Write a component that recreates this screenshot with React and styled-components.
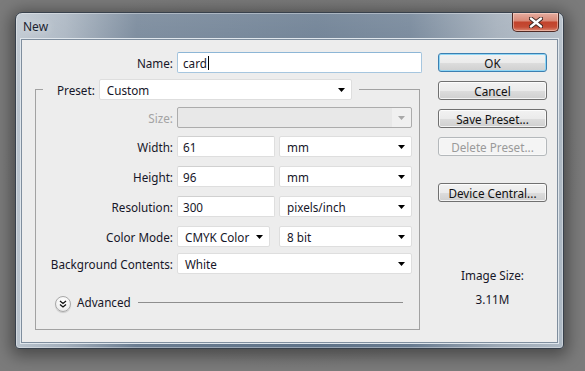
import styled, { createGlobalStyle } from "styled-components";

const GlobalStyle = createGlobalStyle`
  html, body {
    margin: 0;
    background: #7b7b7b;
  }
  body {
    font-family: "Noto Sans", "Liberation Sans", sans-serif;
    font-size: 11.7px;
    color: #161628;
  }
`;

const Desktop = styled.div`
  width: 585px;
  height: 371px;
  padding: 12px 0 0 15px;
  box-sizing: border-box;
  background: radial-gradient(ellipse at 50% 45%, #6f6f6f 0%, #7b7b7b 70%);
`;

const Window = styled.div`
  width: 549px;
  height: 337px;
  box-sizing: border-box;
  border: 1px solid #38414c;
  border-radius: 7px 7px 4px 4px;
  padding: 0 5px 5px;
  display: flex;
  flex-direction: column;
  background:
    linear-gradient(180deg, rgba(255, 255, 255, 0.18) 0%, rgba(255, 255, 255, 0) 30%),
    linear-gradient(90deg, #b9c3cd 0%, #a3afbc 9%, #6b7d91 22%, #5f7389 55%, #687b90 72%, #9ca8b5 88%, #aeb9c4 100%);
  box-shadow: 0 3px 16px 4px rgba(0, 0, 0, 0.4), inset 0 0 0 1px rgba(255, 255, 255, 0.35);
`;

const TitleBar = styled.div`
  height: 26px;
  display: flex;
  justify-content: space-between;
  align-items: center;
  padding-left: 2px;
`;

const Title = styled.span`
  font-size: 12px;
  color: #1b2330;
  text-shadow: 0 0 8px rgba(255, 255, 255, 0.7);
`;

const CloseButton = styled.div`
  align-self: flex-start;
  width: 47px;
  height: 19px;
  box-sizing: border-box;
  margin-right: -1px;
  border: 1px solid #4f2a25;
  border-top: none;
  border-radius: 0 0 5px 5px;
  display: flex;
  align-items: center;
  justify-content: center;
  background: linear-gradient(180deg, #e6ada0 0%, #d98a78 42%, #c2432c 52%, #c44c35 78%, #dc8a74 100%);
  box-shadow: inset 0 0 0 1px rgba(255, 230, 220, 0.45);
`;

const Client = styled.div`
  flex: 1;
  box-sizing: border-box;
  border: 1px solid #7f8e9e;
  box-shadow: 0 0 0 1px #dfe6ec;
  background: #ededed;
  display: flex;
  padding-top: 12px;
`;

const LeftPane = styled.div`
  width: 398px;
  padding-left: 13px;
  box-sizing: border-box;
`;

const RightPane = styled.div`
  margin-left: 18px;
  padding-top: 1px;
  width: 109px;
  display: flex;
  flex-direction: column;
`;

const NameRow = styled.div`
  display: grid;
  grid-template-columns: 138px 245px;
  column-gap: 4px;
  align-items: center;
`;

const Label = styled.span`
  text-align: right;
  white-space: nowrap;
  color: ${({ $disabled }) => ($disabled ? "#a3a3a3" : "#161628")};
`;

const Field = styled.div`
  width: ${({ $width }) => $width}px;
  height: 21px;
  box-sizing: border-box;
  background: #fff;
  border: 1px solid ${({ $focus }) => ($focus ? "#a6c6df" : "#dedede")};
  border-top-color: ${({ $focus }) => ($focus ? "#8db6d6" : "#d0d0d0")};
  border-radius: 2px;
  display: flex;
  align-items: center;
  padding-left: ${({ $pad }) => $pad ?? 5}px;
  white-space: nowrap;
`;

const Caret = styled.span`
  display: inline-block;
  width: 1px;
  height: 14px;
  background: #000;
  margin-left: 1px;
`;

const SelectBox = styled.div`
  width: ${({ $width }) => $width}px;
  height: 21px;
  box-sizing: border-box;
  background: ${({ $disabled }) => ($disabled ? "linear-gradient(90deg, #e8e8e8 92%, #f0f0f0 92%)" : "#fff")};
  border: 1px solid ${({ $disabled }) => ($disabled ? "#acacac" : "#dedede")};
  border-radius: 2px;
  display: flex;
  align-items: center;
  justify-content: space-between;
  padding: 0 6px 0 7px;
  white-space: nowrap;
`;

const Arrow = ({ color = "#000" }) => (
  <svg width="7" height="4" viewBox="0 0 7 4">
    <polygon points="0,0 7,0 3.5,4" fill={color} />
  </svg>
);

const Select = ({ width, children, disabled }) => (
  <SelectBox $width={width} $disabled={disabled}>
    <span>{children}</span>
    <Arrow color={disabled ? "#a8a8a8" : "#000"} />
  </SelectBox>
);

const Fieldset = styled.fieldset`
  margin: 6px 0 0;
  padding: 0 0 18px;
  width: 385px;
  box-sizing: border-box;
  min-width: 0;
  border: 1px solid #a2a2a2;
`;

const Legend = styled.legend`
  margin-left: 7px;
  padding: 0 7px 0 14px;
  display: flex;
  align-items: center;
  gap: 4px;
`;

const Row = styled.div`
  display: grid;
  grid-template-columns: 137px 235px;
  column-gap: 4px;
  align-items: center;
  margin-top: ${({ $mt }) => $mt}px;
`;

const Controls = styled.div`
  display: flex;
  justify-content: space-between;
`;

const AdvancedRow = styled.div`
  display: flex;
  align-items: center;
  margin-top: 20px;
  padding-left: 19px;
  padding-right: 16px;
  height: 17px;
`;

const RoundButton = styled.div`
  width: 16px;
  height: 16px;
  box-sizing: border-box;
  border-radius: 50%;
  border: 1px solid #a8a8a8;
  background: radial-gradient(circle at 50% 35%, #ffffff 0%, #f4f4f4 55%, #dcdcdc 100%);
  box-shadow: 0 1px 1px rgba(0, 0, 0, 0.15);
  display: flex;
  align-items: center;
  justify-content: center;
  margin-top: 2px;
`;

const AdvancedText = styled.span`
  margin-left: 6px;
  margin-bottom: 1px;
`;

const Rule = styled.div`
  flex: 1;
  height: 1px;
  background: #8e8e8e;
  margin-left: 7px;
`;

const Button = styled.div`
  height: 19px;
  box-sizing: border-box;
  border-radius: 3px;
  display: flex;
  align-items: center;
  justify-content: center;
  margin-top: ${({ $mt }) => $mt ?? 9}px;
  border: 1px solid ${({ $primary, $disabled }) => ($primary ? "#3c7fb1" : $disabled ? "#b4b8bb" : "#707070")};
  color: ${({ $disabled }) => ($disabled ? "#9a9a9a" : "#111")};
  background: ${({ $disabled }) =>
    $disabled ? "#f4f4f4" : "linear-gradient(180deg, #f2f2f2 0%, #ebebeb 50%, #dddddd 51%, #cfcfcf 100%)"};
  box-shadow: inset 0 0 0 1px
    ${({ $primary, $disabled }) => ($primary ? "#8fd6f5" : $disabled ? "#f8f8f8" : "rgba(255,255,255,0.75)")};
`;

const SizeInfo = styled.div`
  margin-top: 65px;
  display: flex;
  flex-direction: column;
  align-items: center;
  gap: 8px;
`;

export default function App() {
  return (
    <>
      <GlobalStyle />
      <Desktop>
        <Window>
          <TitleBar>
            <Title>New</Title>
            <CloseButton>
              <svg width="14" height="11" viewBox="0 0 14 11">
                <path
                  d="M2 1.5 L12 9.5 M12 1.5 L2 9.5"
                  stroke="#3a2420"
                  strokeWidth="4.2"
                  strokeLinecap="round"
                />
                <path
                  d="M2 1.5 L12 9.5 M12 1.5 L2 9.5"
                  stroke="#fff"
                  strokeWidth="2.4"
                  strokeLinecap="round"
                />
              </svg>
            </CloseButton>
          </TitleBar>
          <Client>
            <LeftPane>
              <NameRow>
                <Label>Name:</Label>
                <Field $width={245} $focus>
                  card
                  <Caret />
                </Field>
              </NameRow>
              <Fieldset>
                <Legend>
                  <Label>Preset:</Label>
                  <Select width={253}>Custom</Select>
                </Legend>
                <Row $mt={7}>
                  <Label $disabled>Size:</Label>
                  <Select width={235} disabled></Select>
                </Row>
                <Row $mt={8}>
                  <Label>Width:</Label>
                  <Controls>
                    <Field $width={98}>61</Field>
                    <Select width={133}>mm</Select>
                  </Controls>
                </Row>
                <Row $mt={9}>
                  <Label>Height:</Label>
                  <Controls>
                    <Field $width={98}>96</Field>
                    <Select width={133}>mm</Select>
                  </Controls>
                </Row>
                <Row $mt={9}>
                  <Label>Resolution:</Label>
                  <Controls>
                    <Field $width={98}>300</Field>
                    <Select width={133}>pixels/inch</Select>
                  </Controls>
                </Row>
                <Row $mt={9}>
                  <Label>Color Mode:</Label>
                  <Controls>
                    <Select width={93}>CMYK Color</Select>
                    <Select width={133}>8 bit</Select>
                  </Controls>
                </Row>
                <Row $mt={6}>
                  <Label>Background Contents:</Label>
                  <Select width={235}>White</Select>
                </Row>
                <AdvancedRow>
                  <RoundButton>
                    <svg width="8" height="8" viewBox="0 0 8 8">
                      <path
                        d="M1 1 L4 3.5 L7 1 M1 4.5 L4 7 L7 4.5"
                        stroke="#111"
                        strokeWidth="1.3"
                        fill="none"
                      />
                    </svg>
                  </RoundButton>
                  <AdvancedText>Advanced</AdvancedText>
                  <Rule />
                </AdvancedRow>
              </Fieldset>
            </LeftPane>
            <RightPane>
              <Button $primary $mt={0}>OK</Button>
              <Button>Cancel</Button>
              <Button>Save Preset...</Button>
              <Button $disabled>Delete Preset...</Button>
              <Button $mt={27}>Device Central...</Button>
              <SizeInfo>
                <span>Image Size:</span>
                <span>3.11M</span>
              </SizeInfo>
            </RightPane>
          </Client>
        </Window>
      </Desktop>
    </>
  );
}
